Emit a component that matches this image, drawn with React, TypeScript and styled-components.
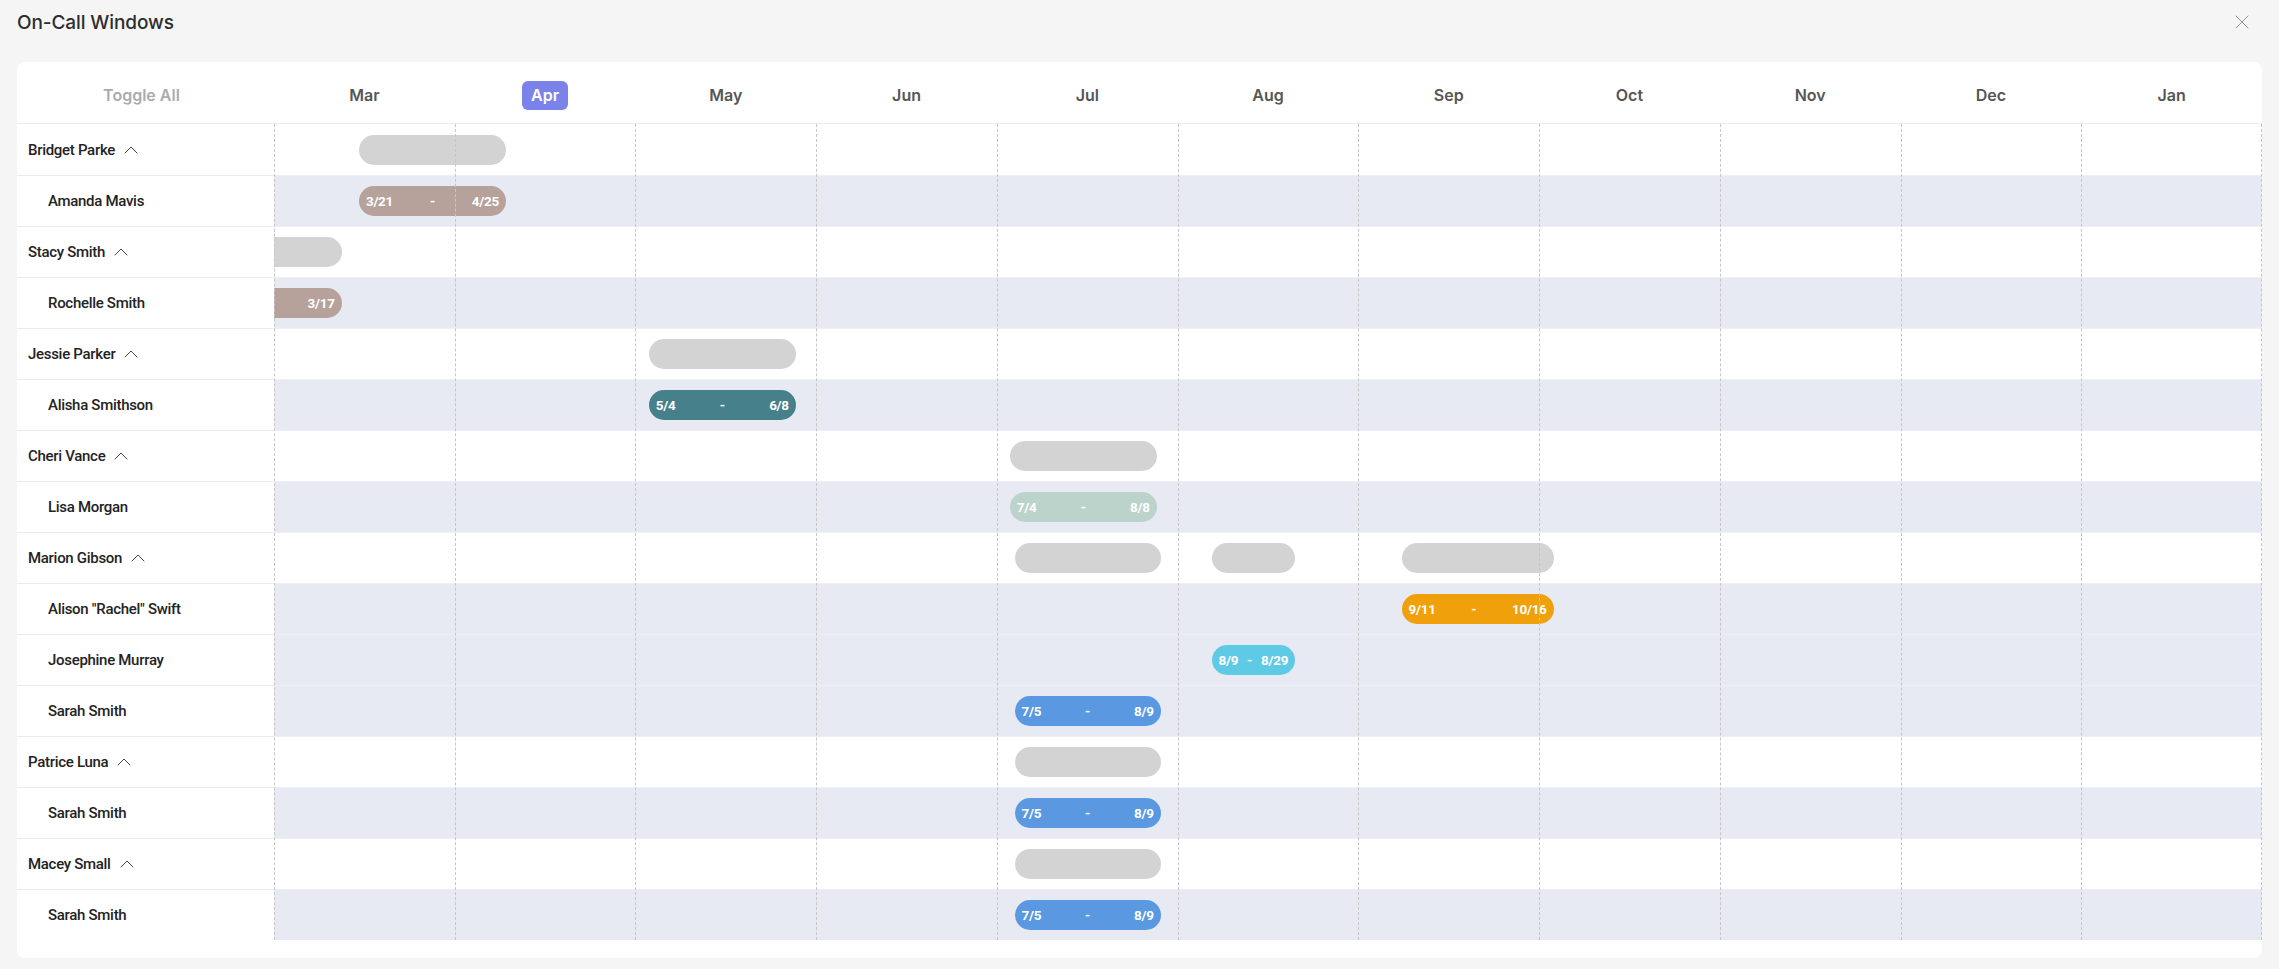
import React from 'react';
import styled, { createGlobalStyle } from 'styled-components';
import { X, ChevronUp } from 'lucide-react';

const MONTHS = ['Mar', 'Apr', 'May', 'Jun', 'Jul', 'Aug', 'Sep', 'Oct', 'Nov', 'Dec', 'Jan'];
const ACTIVE_MONTH = 'Apr';

const colors = {
  page: '#f5f5f5',
  stripe: '#e8eaf3',
  line: '#ececec',
  dash: '#c6c6c6',
  placeholder: '#d3d3d3',
  taupe: '#b6a29b',
  teal: '#46808a',
  sage: '#bcd3cc',
  orange: '#f0a00b',
  cyan: '#5fcae5',
  blue: '#5a98e1',
  accent: '#7b83eb',
};

type Span = { from: number; to: number; color?: string; start?: string; end?: string };
type Row = { name: string; lead?: boolean; spans: Span[] };

const gray = (from: number, to: number): Span => ({ from, to });

// positions are in months from the start of March
const ROWS: Row[] = [
  { name: 'Bridget Parke', lead: true, spans: [gray(0.47, 1.283)] },
  { name: 'Amanda Mavis', spans: [{ from: 0.47, to: 1.283, color: colors.taupe, start: '3/21', end: '4/25' }] },
  { name: 'Stacy Smith', lead: true, spans: [gray(-0.6, 0.374)] },
  { name: 'Rochelle Smith', spans: [{ from: -0.6, to: 0.374, color: colors.taupe, end: '3/17' }] },
  { name: 'Jessie Parker', lead: true, spans: [gray(2.074, 2.887)] },
  { name: 'Alisha Smithson', spans: [{ from: 2.074, to: 2.887, color: colors.teal, start: '5/4', end: '6/8' }] },
  { name: 'Cheri Vance', lead: true, spans: [gray(4.071, 4.884)] },
  { name: 'Lisa Morgan', spans: [{ from: 4.071, to: 4.884, color: colors.sage, start: '7/4', end: '8/8' }] },
  { name: 'Marion Gibson', lead: true, spans: [gray(4.098, 4.906), gray(5.188, 5.65), gray(6.239, 7.08)] },
  { name: 'Alison "Rachel" Swift', spans: [{ from: 6.239, to: 7.08, color: colors.orange, start: '9/11', end: '10/16' }] },
  { name: 'Josephine Murray', spans: [{ from: 5.188, to: 5.65, color: colors.cyan, start: '8/9', end: '8/29' }] },
  { name: 'Sarah Smith', spans: [{ from: 4.098, to: 4.906, color: colors.blue, start: '7/5', end: '8/9' }] },
  { name: 'Patrice Luna', lead: true, spans: [gray(4.098, 4.906)] },
  { name: 'Sarah Smith', spans: [{ from: 4.098, to: 4.906, color: colors.blue, start: '7/5', end: '8/9' }] },
  { name: 'Macey Small', lead: true, spans: [gray(4.098, 4.906)] },
  { name: 'Sarah Smith', spans: [{ from: 4.098, to: 4.906, color: colors.blue, start: '7/5', end: '8/9' }] },
];

const GlobalStyle = createGlobalStyle`
  html, body {
    margin: 0;
    padding: 0;
    background: ${colors.page};
  }
  body {
    font-family: Inter, "Noto Sans", sans-serif;
    color: #333;
  }
`;

const Page = styled.div`
  padding: 0 17px 11px;
`;

const TopBar = styled.div`
  display: flex;
  align-items: center;
  justify-content: space-between;
  height: 44px;
`;

const Title = styled.h1`
  margin: 0;
  font-size: 19px;
  font-weight: 500;
  color: #2d2d2d;
  letter-spacing: -0.1px;
`;

const CloseButton = styled.button`
  display: flex;
  align-items: center;
  justify-content: center;
  margin-right: 8px;
  padding: 0;
  border: none;
  background: none;
  color: #8e959c;
  cursor: pointer;
`;

const Card = styled.div`
  margin-top: 18px;
  padding-bottom: 18px;
  background: #fff;
  border-radius: 8px;
  overflow: hidden;
`;

const Header = styled.div`
  display: grid;
  grid-template-columns: 257px repeat(11, 1fr);
  align-items: center;
  height: 62px;
  padding-top: 5px;
  box-sizing: border-box;
  border-bottom: 1px solid ${colors.line};
`;

const ToggleAll = styled.button`
  justify-self: center;
  margin-left: -8px;
  padding: 0;
  border: none;
  background: none;
  font-family: Inter, "Noto Sans", sans-serif;
  font-size: 16px;
  font-weight: 600;
  color: #ababab;
  cursor: pointer;
`;

const MonthCell = styled.div`
  display: flex;
  justify-content: center;
`;

const MonthLabel = styled.span<{ $active?: boolean }>`
  padding: 5px 9px;
  border-radius: 6px;
  font-size: 16px;
  font-weight: 600;
  line-height: 19px;
  color: ${({ $active }) => ($active ? '#fff' : '#565656')};
  background: ${({ $active }) => ($active ? colors.accent : 'transparent')};
`;

const Body = styled.div`
  display: grid;
  grid-template-columns: 257px 1fr;
`;

const NameColumn = styled.div`
  display: flex;
  flex-direction: column;
`;

const NameCell = styled.div<{ $lead?: boolean }>`
  display: flex;
  align-items: center;
  gap: 4px;
  height: 51px;
  box-sizing: border-box;
  padding-left: ${({ $lead }) => ($lead ? 11 : 31)}px;
  font-family: Roboto, "Liberation Sans", sans-serif;
  font-size: 15px;
  font-weight: 500;
  letter-spacing: -0.3px;
  color: #232323;
  & + & {
    border-top: 1px solid ${colors.line};
  }
  svg {
    color: #444;
  }
`;

const Timeline = styled.div`
  position: relative;
  display: flex;
  flex-direction: column;
`;

const Track = styled.div<{ $lead?: boolean }>`
  position: relative;
  height: 51px;
  box-sizing: border-box;
  overflow: hidden;
  background: ${({ $lead }) => ($lead ? '#fff' : colors.stripe)};
  & + & {
    border-top: 1px solid ${({ $lead }) => ($lead ? '#fff' : '#edeff6')};
  }
`;

const Bar = styled.div<{ $color?: string; $endOnly?: boolean }>`
  position: absolute;
  top: 50%;
  transform: translateY(-50%);
  display: flex;
  align-items: center;
  justify-content: ${({ $endOnly }) => ($endOnly ? 'flex-end' : 'space-between')};
  height: 30px;
  padding: 0 7px;
  box-sizing: border-box;
  border-radius: 15px;
  background: ${({ $color }) => $color || colors.placeholder};
  font-family: Roboto, "Liberation Sans", sans-serif;
  font-size: 13.5px;
  font-weight: 700;
  letter-spacing: -0.3px;
  color: #fff;
  white-space: nowrap;
`;

const GridLines = styled.div`
  position: absolute;
  inset: 0;
  display: grid;
  grid-template-columns: repeat(11, 1fr);
  pointer-events: none;
`;

const GridLine = styled.div`
  border-left: 1px dashed ${colors.dash};
  &:last-child {
    border-right: 1px dashed ${colors.dash};
  }
`;

const pct = (months: number) => `${(months / MONTHS.length) * 100}%`;

const SpanBar = ({ span }: { span: Span }) => (
  <Bar
    $color={span.color}
    $endOnly={!span.start}
    style={{ left: pct(span.from), width: pct(span.to - span.from) }}
  >
    {span.start && <span>{span.start}</span>}
    {span.start && <span>-</span>}
    {span.end && <span>{span.end}</span>}
  </Bar>
);

const App = () => {
  return (
    <Page>
      <GlobalStyle />
      <TopBar>
        <Title>On-Call Windows</Title>
        <CloseButton aria-label="Close">
          <X size={24} strokeWidth={1} />
        </CloseButton>
      </TopBar>
      <Card>
        <Header>
          <ToggleAll>Toggle All</ToggleAll>
          {MONTHS.map((m) => (
            <MonthCell key={m}>
              <MonthLabel $active={m === ACTIVE_MONTH}>{m}</MonthLabel>
            </MonthCell>
          ))}
        </Header>
        <Body>
          <NameColumn>
            {ROWS.map((row, i) => (
              <NameCell key={i} $lead={row.lead}>
                {row.name}
                {row.lead && <ChevronUp size={24} strokeWidth={1} />}
              </NameCell>
            ))}
          </NameColumn>
          <Timeline>
            {ROWS.map((row, i) => (
              <Track key={i} $lead={row.lead}>
                {row.spans.map((s, j) => (
                  <SpanBar key={j} span={s} />
                ))}
              </Track>
            ))}
            <GridLines>
              {MONTHS.map((m) => (
                <GridLine key={m} />
              ))}
            </GridLines>
          </Timeline>
        </Body>
      </Card>
    </Page>
  );
};

export default App;
